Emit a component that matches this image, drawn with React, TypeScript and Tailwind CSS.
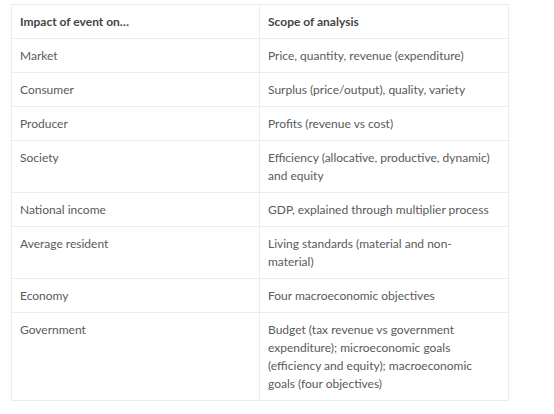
import type { ReactNode } from "react";

const ROWS: [string, ReactNode][] = [
  ["Market", "Price, quantity, revenue (expenditure)"],
  ["Consumer", "Surplus (price/output), quality, variety"],
  ["Producer", "Profits (revenue vs cost)"],
  ["Society", "Efficiency (allocative, productive, dynamic) and equity"],
  ["National income", "GDP, explained through multiplier process"],
  [
    "Average resident",
    <>
      Living standards (material and non-
      <br />
      material)
    </>,
  ],
  ["Economy", "Four macroeconomic objectives"],
  [
    "Government",
    "Budget (tax revenue vs government expenditure); microeconomic goals (efficiency and equity); macroeconomic goals (four objectives)",
  ],
];

export default function App() {
  return (
    <div className="h-[414px] w-[554px] bg-white pl-[11px] pt-[4px] font-['Lato',sans-serif]">
      <table className="w-[497px] table-fixed border-collapse border border-[#ececec] text-[12px] leading-[18px] text-[#5a5a5a]">
        <colgroup>
          <col className="w-[248px]" />
          <col className="w-[249px]" />
        </colgroup>
        <thead>
          <tr>
            <th className="border border-[#ececec] px-2 pb-[7px] pt-2 text-left font-bold text-[#444]">
              Impact of event on…
            </th>
            <th className="border border-[#ececec] px-2 pb-[7px] pt-2 text-left font-bold text-[#444]">
              Scope of analysis
            </th>
          </tr>
        </thead>
        <tbody>
          {ROWS.map(([a, b]) => (
            <tr key={a}>
              <td className="border border-[#ececec] px-2 pb-[7px] pt-2 align-top">{a}</td>
              <td className="border border-[#ececec] px-2 pb-[7px] pt-2 align-top">{b}</td>
            </tr>
          ))}
        </tbody>
      </table>
    </div>
  );
}
